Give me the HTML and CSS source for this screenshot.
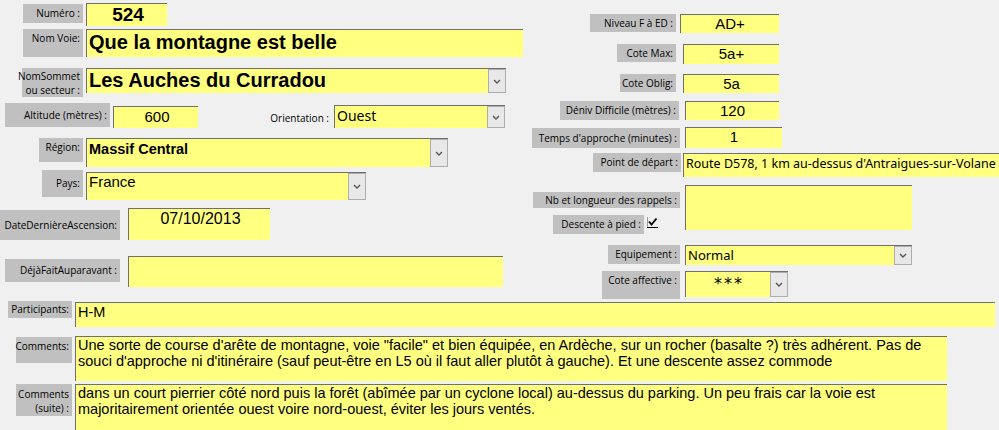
FILE: index.html
```html
<!DOCTYPE html>
<html>
<head>
  <title>Voie 524</title>
  <link rel="stylesheet" href="styles.css">
</head>
<body>
  <div class="form">
    <div class="top">

      <div class="col-left">
        <div class="row r-numero">
          <div class="lbl l-numero">Numéro :</div>
          <div class="fld f-numero">524</div>
        </div>
        <div class="row r-voie">
          <div class="lbl hi l-voie">Nom Voie:</div>
          <div class="fld f-voie">Que la montagne est belle</div>
        </div>
        <div class="row r-sommet">
          <div class="lbl l-sommet">NomSommet<br>ou secteur :</div>
          <div class="fld combo f-sommet">
            <span class="val">Les Auches du Curradou</span>
            <span class="drop"><svg width="8" height="5" viewBox="0 0 8 5"><polyline points="1,1 4,4 7,1" fill="none" stroke="#555" stroke-width="1.4"/></svg></span>
          </div>
        </div>
        <div class="row r-alt">
          <div class="lbl l-alt">Altitude (mètres) :</div>
          <div class="fld f-alt">600</div>
          <div class="lbl bare l-orient">Orientation :</div>
          <div class="fld combo f-orient">
            <span class="val">Ouest</span>
            <span class="drop"><svg width="8" height="5" viewBox="0 0 8 5"><polyline points="1,1 4,4 7,1" fill="none" stroke="#555" stroke-width="1.4"/></svg></span>
          </div>
        </div>
        <div class="row r-region">
          <div class="lbl hi l-region">Région:</div>
          <div class="fld combo f-region">
            <span class="val">Massif Central</span>
            <span class="drop"><svg width="8" height="5" viewBox="0 0 8 5"><polyline points="1,1 4,4 7,1" fill="none" stroke="#555" stroke-width="1.4"/></svg></span>
          </div>
        </div>
        <div class="row r-pays">
          <div class="lbl l-pays">Pays:</div>
          <div class="fld combo f-pays">
            <span class="val">France</span>
            <span class="drop"><svg width="8" height="5" viewBox="0 0 8 5"><polyline points="1,1 4,4 7,1" fill="none" stroke="#555" stroke-width="1.4"/></svg></span>
          </div>
        </div>
        <div class="row r-date">
          <div class="lbl l-date">DateDernièreAscension:</div>
          <div class="fld f-date">07/10/2013</div>
        </div>
        <div class="row r-deja">
          <div class="lbl l-deja">DéjàFaitAuparavant :</div>
          <div class="fld f-deja"></div>
        </div>
      </div>

      <div class="col-right">
        <div class="row r-niveau">
          <div class="lbl l-niveau">Niveau F à ED :</div>
          <div class="fld mid f-niveau">AD+</div>
        </div>
        <div class="row r-max">
          <div class="lbl l-max">Cote Max:</div>
          <div class="fld mid f-max">5a+</div>
        </div>
        <div class="row r-oblig">
          <div class="lbl l-oblig">Cote Oblig:</div>
          <div class="fld mid f-oblig">5a</div>
        </div>
        <div class="row r-deniv">
          <div class="lbl l-deniv">Déniv Difficile (mètres) :</div>
          <div class="fld mid f-deniv">120</div>
        </div>
        <div class="row r-temps">
          <div class="lbl l-temps">Temps d'approche (minutes) :</div>
          <div class="fld mid f-temps">1</div>
        </div>
        <div class="row r-depart">
          <div class="lbl l-depart">Point de départ :</div>
          <div class="fld f-depart">Route D578, 1 km au-dessus d'Antraigues-sur-Volane</div>
        </div>
        <div class="row r-rappels">
          <div class="stack">
            <div class="lbl l-rappels">Nb et longueur des rappels :</div>
            <div class="pied">
              <div class="lbl l-pied">Descente à pied :</div>
              <svg class="check" width="11" height="11" viewBox="0 0 11 11">
                <line x1="0.5" y1="0" x2="0.5" y2="11" stroke="#9a9a9a"/>
                <line x1="0" y1="10.5" x2="11" y2="10.5" stroke="#000"/>
                <polyline points="2,4.5 4.5,7.5 9.5,1.5" fill="none" stroke="#000" stroke-width="1.8"/>
              </svg>
            </div>
          </div>
          <div class="fld f-rappels"></div>
        </div>
        <div class="row r-equip">
          <div class="lbl l-equip">Equipement :</div>
          <div class="fld combo f-equip">
            <span class="val">Normal</span>
            <span class="drop"><svg width="8" height="5" viewBox="0 0 8 5"><polyline points="1,1 4,4 7,1" fill="none" stroke="#555" stroke-width="1.4"/></svg></span>
          </div>
        </div>
        <div class="row r-affect">
          <div class="lbl hi l-affect">Cote affective :</div>
          <div class="fld combo f-affect">
            <span class="val">***</span>
            <span class="drop"><svg width="8" height="5" viewBox="0 0 8 5"><polyline points="1,1 4,4 7,1" fill="none" stroke="#555" stroke-width="1.4"/></svg></span>
          </div>
        </div>
      </div>

    </div>

    <div class="bottom">
      <div class="row r-part">
        <div class="lbl l-part">Participants:</div>
        <div class="fld memo f-part">H-M</div>
      </div>
      <div class="row r-comm">
        <div class="lbl hi l-comm">Comments:</div>
        <div class="fld memo f-comm">Une sorte de course d'arête de montagne, voie "facile" et bien équipée, en Ardèche, sur un rocher (basalte ?) très adhérent. Pas de souci d'approche ni d'itinéraire (sauf peut-être en L5 où il faut aller plutôt à gauche). Et une descente assez commode</div>
      </div>
      <div class="row r-suite">
        <div class="lbl hi l-suite">Comments<br>(suite) :</div>
        <div class="fld memo f-suite">dans un court pierrier côté nord puis la forêt (abîmée par un cyclone local) au-dessus du parking. Un peu frais car la voie est majoritairement orientée ouest voire nord-ouest, éviter les jours ventés.</div>
      </div>
    </div>
  </div>
</body>
</html>
```

FILE: styles.css
```css
body {
  margin: 0;
  background-color: #f0f0f0;
  font-family: "Liberation Sans", Arial, sans-serif;
  color: #000;
  overflow: hidden;
}

.form {
  width: 999px;
  height: 430px;
}

.top {
  display: flex;
  height: 301px;
}

.col-left {
  width: 525px;
  flex: none;
}

.col-right {
  width: 474px;
  flex: none;
}

.row {
  display: flex;
  align-items: flex-start;
}

/* labels */
.lbl {
  flex: none;
  box-sizing: border-box;
  background-color: #c0c0c0;
  font-family: "Open Sans", sans-serif;
  font-size: 10px;
  line-height: 13px;
  text-align: right;
  white-space: nowrap;
  padding: 0 3px;
  display: flex;
  align-items: center;
  justify-content: flex-end;
}

.lbl.hi {
  align-items: flex-start;
  padding-top: 3px;
}

.lbl.bare {
  background-color: transparent;
}

/* fields */
.fld {
  flex: none;
  box-sizing: border-box;
  background-color: #ffff80;
  border-top: 1px solid #6f6f6f;
  border-left: 1px solid #6f6f6f;
  white-space: nowrap;
  overflow: hidden;
  padding-left: 2px;
}

.fld.mid {
  text-align: center;
  font-size: 15px;
  line-height: 17px;
  padding-left: 0;
}

.combo {
  display: flex;
  align-items: stretch;
  padding-left: 0;
}

.combo .val {
  flex: 1;
  padding-left: 2px;
  overflow: hidden;
}

.combo .drop {
  flex: none;
  width: 18px;
  box-sizing: border-box;
  background-color: #e8e8e8;
  border: 1px solid #adadad;
  display: flex;
  align-items: center;
  justify-content: center;
}

.memo {
  white-space: normal;
  font-size: 14.5px;
  line-height: 16px;
  padding-left: 2px;
}

/* left column */
.r-numero { margin-top: 3px; }
.l-numero { margin: 1px 0 0 23px; width: 60px; height: 19px; }
.f-numero {
  margin-left: 3px; width: 81px; height: 23px;
  font-size: 19px; font-weight: bold; line-height: 22px; text-align: center;
}

.r-voie { margin-top: 3px; }
.l-voie { margin-left: 23px; width: 60px; height: 28px; padding-top: 2px; }
.f-voie {
  margin-left: 3px; width: 437px; height: 28px;
  font-size: 20px; font-weight: bold; line-height: 24px;
}

.r-sommet { margin-top: 11px; }
.l-sommet { margin-left: 22px; width: 61px; height: 29px; line-height: 14px; }
.f-sommet {
  margin-left: 3px; width: 420px; height: 25px;
  font-size: 20px; font-weight: bold; line-height: 23px;
}

.r-alt { margin-top: 6px; }
.l-alt { margin-left: 5px; width: 105px; height: 24px; }
.f-alt {
  margin: 3px 0 0 3px; width: 85px; height: 22px;
  font-size: 15px; line-height: 19px; text-align: center;
}
.l-orient { margin: 6px 0 0 66px; width: 68px; height: 18px; }
.f-orient {
  margin: 2px 0 0 2px; width: 171px; height: 23px;
  font-family: "Noto Sans", sans-serif; font-size: 14px; line-height: 20px;
}

.r-region { margin-top: 10px; }
.l-region { margin-left: 39px; width: 44px; height: 24px; }
.f-region {
  margin-left: 3px; width: 362px; height: 29px;
  font-size: 14.5px; font-weight: bold; line-height: 20px;
}

.r-pays { margin-top: 3px; }
.l-pays { margin-left: 42px; width: 41px; height: 27px; }
.f-pays {
  margin: 2px 0 0 3px; width: 280px; height: 28px;
  font-size: 15px; line-height: 18px;
}

.r-date { margin-top: 8px; }
.l-date { margin-top: 2px; width: 120px; height: 30px; }
.f-date {
  margin-left: 8px; width: 142px; height: 32px;
  font-size: 16px; line-height: 20px; text-align: center;
}

.r-deja { margin-top: 16px; }
.l-deja { margin: 3px 0 0 5px; width: 115px; height: 23px; }
.f-deja { margin-left: 8px; width: 375px; height: 31px; }

/* right column */
.r-niveau { margin-top: 14px; }
.l-niveau { margin-left: 65px; width: 86px; height: 18px; }
.f-niveau { margin-left: 4px; width: 99px; height: 19px; }

.r-max { margin-top: 11px; }
.l-max { margin-left: 92px; width: 59px; height: 18px; }
.f-max { margin-left: 7px; width: 96px; height: 20px; }

.r-oblig { margin-top: 10px; }
.l-oblig { margin-left: 95px; width: 56px; height: 18px; }
.f-oblig { margin-left: 7px; width: 96px; height: 19px; }

.r-deniv { margin-top: 8px; }
.l-deniv { margin-left: 35px; width: 119px; height: 19px; }
.f-deniv { margin-left: 6px; width: 94px; height: 19px; }

.r-temps { margin-top: 7px; }
.l-temps { margin: 1px 0 0 7px; width: 148px; height: 20px; }
.f-temps { margin-left: 5px; width: 97px; height: 21px; line-height: 15px; }

.r-depart { margin-top: 5px; }
.l-depart { margin-left: 68px; width: 88px; height: 19px; }
.f-depart {
  margin-left: 2px; width: 330px; height: 24px;
  font-family: "Noto Sans", sans-serif; font-size: 12.5px; line-height: 20px;
}

.r-rappels { margin-top: 8px; }
.stack {
  flex: none;
  width: 160px;
}
.l-rappels { margin: 7px 0 0 8px; width: 147px; height: 16px; }
.pied {
  display: flex;
  align-items: flex-start;
  margin: 7px 0 0 28px;
}
.l-pied { width: 91px; height: 19px; }
.check { margin: 2px 0 0 3px; }
.f-rappels { width: 227px; height: 45px; }

.r-equip { margin-top: 11px; }
.l-equip { margin-left: 83px; width: 72px; height: 19px; }
.f-equip {
  margin-left: 5px; width: 227px; height: 20px;
  font-family: "Noto Sans", sans-serif; font-size: 13px; line-height: 18px;
}

.r-affect { margin-top: 6px; }
.l-affect { margin-left: 77px; width: 78px; height: 28px; padding-top: 4px; }
.f-affect {
  margin-left: 5px; width: 103px; height: 26px;
  font-family: "DejaVu Sans", sans-serif; font-size: 16px; line-height: 24px;
}
.f-affect .val { text-align: center; letter-spacing: 2px; }

/* bottom */
.l-part { margin-left: 8px; width: 64px; height: 17px; }
.f-part { margin: 1px 0 0 3px; width: 920px; height: 25px; line-height: 18px; }

.r-comm { margin-top: 9px; }
.l-comm { margin: 1px 0 0 16px; width: 56px; height: 26px; }
.f-comm { margin-left: 3px; width: 872px; height: 45px; }

.r-suite { margin-top: 3px; }
.l-suite { margin-left: 16px; width: 56px; height: 32px; padding-top: 1px; line-height: 14px; }
.f-suite { margin-left: 3px; width: 872px; height: 60px; }
```
